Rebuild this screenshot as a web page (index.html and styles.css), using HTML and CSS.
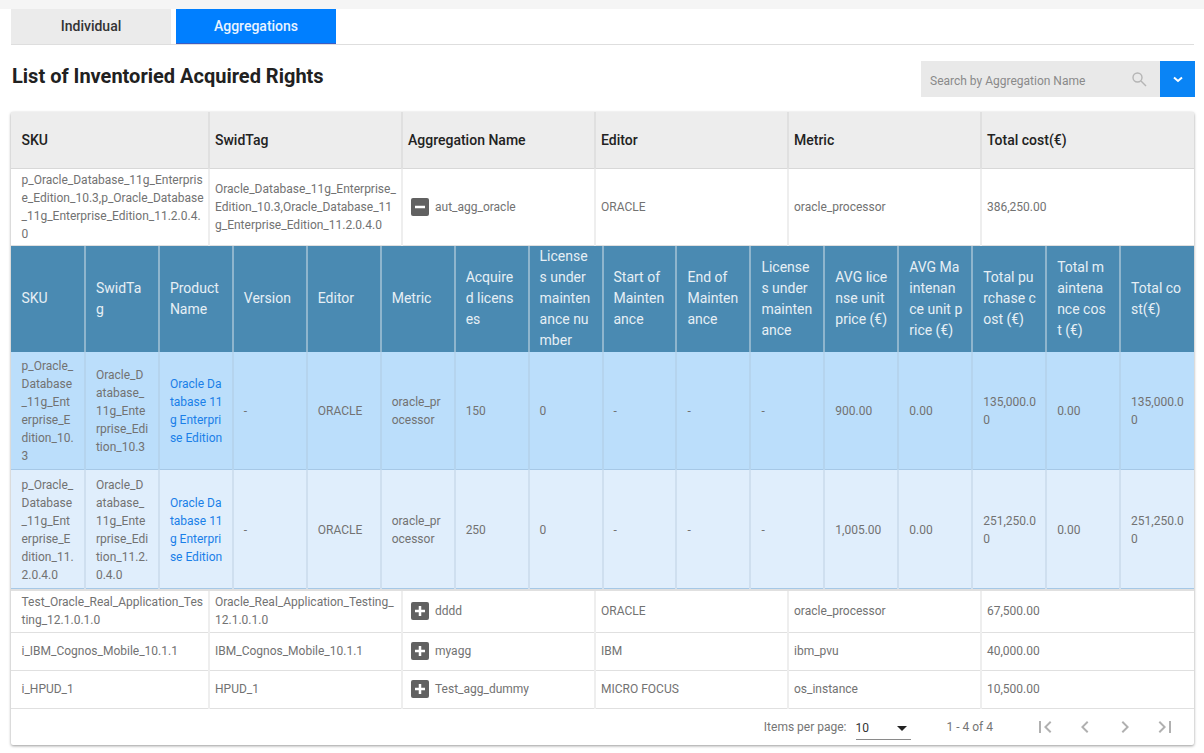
FILE: index.html
```html
<!DOCTYPE html>
<html lang="en">

<head>
    <meta charset="UTF-8">
    <meta name="viewport" content="width=device-width, initial-scale=1.0">
    <title>Acquired Rights</title>
    <link rel="stylesheet" href="styles.css">
</head>

<body>
    <div class="topBand"></div>
    <div class="page">
        <div class="tabs">
            <div class="tab">Individual</div>
            <div class="tab active">Aggregations</div>
        </div>

        <div class="titleRow">
            <h1>List of Inventoried Acquired Rights</h1>
            <div class="searchBox">
                <div class="searchField">
                    <span>Search by Aggregation Name</span>
                    <svg width="16" height="16" viewBox="0 0 16 16" fill="none" stroke="#b5b5b5" stroke-width="1.4">
                        <circle cx="6.5" cy="6.5" r="4.5"></circle>
                        <path d="M10 10l5 5"></path>
                    </svg>
                </div>
                <div class="searchBtn">
                    <svg width="12" height="12" viewBox="0 0 12 12" fill="none" stroke="#fff" stroke-width="2">
                        <path d="M2 4.500L6 8l4-3.500"></path>
                    </svg>
                </div>
            </div>
        </div>

        <div class="card">
            <table class="mainTable">
                <colgroup>
                    <col class="colA">
                    <col class="colB">
                    <col class="colB">
                    <col class="colB">
                    <col class="colB">
                    <col>
                </colgroup>
                <thead>
                    <tr>
                        <th>SKU</th>
                        <th>SwidTag</th>
                        <th>Aggregation Name</th>
                        <th>Editor</th>
                        <th>Metric</th>
                        <th>Total cost(€)</th>
                    </tr>
                </thead>
                <tbody>
                    <tr class="rowOpen">
                        <td>p_Oracle_Database_11g_Enterprise_Edition_10.3,p_Oracle_Database_11g_Enterprise_Edition_11.2.0.4.0</td>
                        <td>Oracle_Database_11g_Enterprise_Edition_10.3,Oracle_Database_11g_Enterprise_Edition_11.2.0.4.0</td>
                        <td>
                            <div class="aggName">
                                <svg class="toggle" viewBox="0 0 18 18"><rect width="18" height="18" rx="2" fill="#616161"></rect><path d="M4 9h10" stroke="#fff" stroke-width="2.500"></path></svg>
                                aut_agg_oracle
                            </div>
                        </td>
                        <td>ORACLE</td>
                        <td>oracle_processor</td>
                        <td>386,250.00</td>
                    </tr>
                    <tr>
                        <td colspan="6" class="nestedCell">
                            <table class="subTable">
                                <thead>
                                    <tr>
                                        <th>SKU</th>
                                        <th>SwidTag</th>
                                        <th>Product Name</th>
                                        <th>Version</th>
                                        <th>Editor</th>
                                        <th>Metric</th>
                                        <th>Acquired licenses</th>
                                        <th>Licenses under maintenance number</th>
                                        <th>Start of Maintenance</th>
                                        <th>End of Maintenance</th>
                                        <th>Licenses under maintenance</th>
                                        <th>AVG license unit price (€)</th>
                                        <th>AVG Maintenance unit price (€)</th>
                                        <th>Total purchase cost (€)</th>
                                        <th class="narrowHead">Total maintenance cost (€)</th>
                                        <th>Total cost(€)</th>
                                    </tr>
                                </thead>
                                <tbody>
                                    <tr class="subDark">
                                        <td>p_Oracle_Database_11g_Enterprise_Edition_10.3</td>
                                        <td>Oracle_Database_11g_Enterprise_Edition_10.3</td>
                                        <td><a href="#">Oracle Database 11g Enterprise Edition</a></td>
                                        <td>-</td>
                                        <td>ORACLE</td>
                                        <td>oracle_processor</td>
                                        <td>150</td>
                                        <td>0</td>
                                        <td>-</td>
                                        <td>-</td>
                                        <td>-</td>
                                        <td>900.00</td>
                                        <td>0.00</td>
                                        <td>135,000.00</td>
                                        <td>0.00</td>
                                        <td>135,000.00</td>
                                    </tr>
                                    <tr class="subLight">
                                        <td>p_Oracle_Database_11g_Enterprise_Edition_11.2.0.4.0</td>
                                        <td>Oracle_Database_11g_Enterprise_Edition_11.2.0.4.0</td>
                                        <td><a href="#">Oracle Database 11g Enterprise Edition</a></td>
                                        <td>-</td>
                                        <td>ORACLE</td>
                                        <td>oracle_processor</td>
                                        <td>250</td>
                                        <td>0</td>
                                        <td>-</td>
                                        <td>-</td>
                                        <td>-</td>
                                        <td>1,005.00</td>
                                        <td>0.00</td>
                                        <td>251,250.00</td>
                                        <td>0.00</td>
                                        <td>251,250.00</td>
                                    </tr>
                                </tbody>
                            </table>
                        </td>
                    </tr>
                    <tr class="rowA">
                        <td>Test_Oracle_Real_Application_Testing_12.1.0.1.0</td>
                        <td>Oracle_Real_Application_Testing_12.1.0.1.0</td>
                        <td>
                            <div class="aggName">
                                <svg class="toggle" viewBox="0 0 18 18"><rect width="18" height="18" rx="2" fill="#616161"></rect><path d="M4 9h10M9 4v10" stroke="#fff" stroke-width="2.500"></path></svg>
                                dddd
                            </div>
                        </td>
                        <td>ORACLE</td>
                        <td>oracle_processor</td>
                        <td>67,500.00</td>
                    </tr>
                    <tr class="rowB">
                        <td>i_IBM_Cognos_Mobile_10.1.1</td>
                        <td>IBM_Cognos_Mobile_10.1.1</td>
                        <td>
                            <div class="aggName">
                                <svg class="toggle" viewBox="0 0 18 18"><rect width="18" height="18" rx="2" fill="#616161"></rect><path d="M4 9h10M9 4v10" stroke="#fff" stroke-width="2.500"></path></svg>
                                myagg
                            </div>
                        </td>
                        <td>IBM</td>
                        <td>ibm_pvu</td>
                        <td>40,000.00</td>
                    </tr>
                    <tr class="rowB">
                        <td>i_HPUD_1</td>
                        <td>HPUD_1</td>
                        <td>
                            <div class="aggName">
                                <svg class="toggle" viewBox="0 0 18 18"><rect width="18" height="18" rx="2" fill="#616161"></rect><path d="M4 9h10M9 4v10" stroke="#fff" stroke-width="2.500"></path></svg>
                                Test_agg_dummy
                            </div>
                        </td>
                        <td>MICRO FOCUS</td>
                        <td>os_instance</td>
                        <td>10,500.00</td>
                    </tr>
                </tbody>
            </table>

            <div class="paginator">
                <span class="perPage">Items per page:</span>
                <div class="pageSelect">
                    <span>10</span>
                    <i class="caret"></i>
                </div>
                <span class="range">1 - 4 of 4</span>
                <div class="pageBtns">
                    <svg viewBox="0 0 24 24"><path d="M18.400 16.600L13.800 12l4.600-4.600L17 6l-6 6 6 6zM6 6h2v12H6z"></path></svg>
                    <svg viewBox="0 0 24 24"><path d="M15.400 7.400L14 6l-6 6 6 6 1.400-1.400L10.800 12z"></path></svg>
                    <svg viewBox="0 0 24 24"><path d="M10 6L8.600 7.400 13.200 12l-4.600 4.600L10 18l6-6z"></path></svg>
                    <svg viewBox="0 0 24 24"><path d="M5.600 7.400L10.200 12l-4.600 4.600L7 18l6-6-6-6zM16 6h2v12h-2z"></path></svg>
                </div>
            </div>
        </div>
    </div>
</body>

</html>
```

FILE: styles.css
```css
html,
body {
    margin: 0;
    padding: 0;
    height: 753px;
    overflow: hidden;
    background-color: #fff;
}

body {
    font-family: 'Roboto', 'Liberation Sans', sans-serif;
    font-size: 12px;
    color: #727272;
}

th,
td {
    box-sizing: border-box;
}

.topBand {
    height: 9px;
    background-color: #f5f5f5;
}

.page {
    width: 1183px;
    margin-left: 11px;
}

.tabs {
    display: flex;
    gap: 5px;
    height: 36px;
    box-sizing: border-box;
    border-bottom: 1px solid #dedede;
}

.tab {
    width: 160px;
    display: flex;
    align-items: center;
    justify-content: center;
    box-sizing: border-box;
    padding-bottom: 1px;
    background-color: #ebebeb;
    color: #333;
    font-size: 14px;
    font-weight: 500;
}

.tab.active {
    background-color: #007fff;
    color: #e8f3ff;
    border-bottom: 1px solid #3b5cc4;
}

.titleRow {
    height: 67px;
    display: flex;
    justify-content: space-between;
    align-items: flex-start;
}

h1 {
    margin: 19px 0 0 1px;
    font-size: 20px;
    line-height: 24px;
    font-weight: 700;
    color: #212121;
}

.searchBox {
    display: flex;
    margin: 16px -1px 0 0;
    height: 36px;
}

.searchField {
    width: 239px;
    box-sizing: border-box;
    padding: 0 13px 0 9px;
    display: flex;
    align-items: center;
    justify-content: space-between;
    background-color: #e9e9e9;
    color: #8a8a8a;
}

.searchField span {
    margin-top: 3px;
}

.searchBtn {
    width: 35px;
    display: flex;
    align-items: center;
    justify-content: center;
    background-color: #0a84f5;
}

.card {
    height: 633px;
    border-radius: 2px;
    box-shadow: 0 1px 3px rgba(0, 0, 0, 0.4);
    background-color: #fff;
}

table {
    width: 100%;
    border-collapse: collapse;
    table-layout: fixed;
}

.colA {
    width: 198px;
}

.colB {
    width: 193px;
}

.mainTable > thead th {
    height: 56px;
    padding: 0 5px;
    text-align: left;
    font-size: 14px;
    font-weight: 500;
    color: #222;
    background-color: #ededed;
    border-right: 2px solid #e0e0e0;
    border-bottom: 1px solid #d8d8d8;
}

.mainTable > tbody > tr > td {
    padding: 0 5px;
    font-size: 12px;
    line-height: 18px;
    word-break: break-all;
    border-right: 2px solid #eee;
    border-bottom: 1px solid #e0e0e0;
}

.mainTable > thead th:first-child,
.mainTable > tbody > tr > td:first-child {
    padding: 0 3px 0 10.5px;
}

.mainTable > thead th:last-child,
.mainTable > tbody > tr > td:last-child {
    border-right: none;
}

.rowOpen td {
    height: 77px;
}

.rowA td {
    height: 42px;
}

.rowB td {
    height: 38px;
}

.mainTable > tbody > tr > td.nestedCell {
    padding: 0;
    border-right: none;
    border-bottom: 2px solid #e0e0e0;
}

.aggName {
    display: flex;
    align-items: center;
    gap: 6px;
    padding-left: 3px;
}

.toggle {
    width: 18px;
    height: 18px;
    flex-shrink: 0;
}

.subTable th {
    height: 106px;
    padding: 0 8.8px 0 10px;
    text-align: left;
    font-size: 14px;
    line-height: 21px;
    font-weight: 400;
    color: #e6eff5;
    word-break: break-all;
    background-color: #4a8ab2;
    border-right: 2px solid #8fb5cd;
}

.subTable th.narrowHead {
    padding-right: 11px;
}

.subTable td {
    height: 118px;
    padding: 1px 9px 0 10px;
    line-height: 18px;
    word-break: break-all;
    border-right: 2px solid rgba(170, 190, 210, 0.3);
    border-bottom: 1px solid #a6c8e6;
}

.subTable th:first-child,
.subTable td:first-child {
    padding-left: 10.5px;
}

.subTable th:last-child,
.subTable td:last-child {
    border-right: none;
}

.subDark td {
    background-color: #bbdefb;
}

.subLight td {
    height: 119px;
    background-color: #e0eefc;
}

.subTable a {
    color: #1a7fe8;
    text-decoration: none;
}

.paginator {
    height: 37px;
    display: flex;
    align-items: center;
    justify-content: flex-end;
    color: #757575;
}

.perPage {
    margin-right: 9px;
}

.pageSelect {
    width: 55px;
    height: 22px;
    box-sizing: border-box;
    display: flex;
    align-items: center;
    justify-content: space-between;
    padding-right: 4px;
    margin-top: 3px;
    border-bottom: 1px solid #8a8a8a;
    color: #333;
}

.caret {
    width: 0;
    height: 0;
    border-left: 5px solid transparent;
    border-right: 5px solid transparent;
    border-top: 5px solid #222;
}

.range {
    margin-left: 36px;
    margin-right: 32px;
}

.pageBtns {
    display: flex;
    margin-right: 9px;
}

.pageBtns svg {
    width: 24px;
    height: 24px;
    padding: 8px;
    fill: #b0b0b0;
}
```
